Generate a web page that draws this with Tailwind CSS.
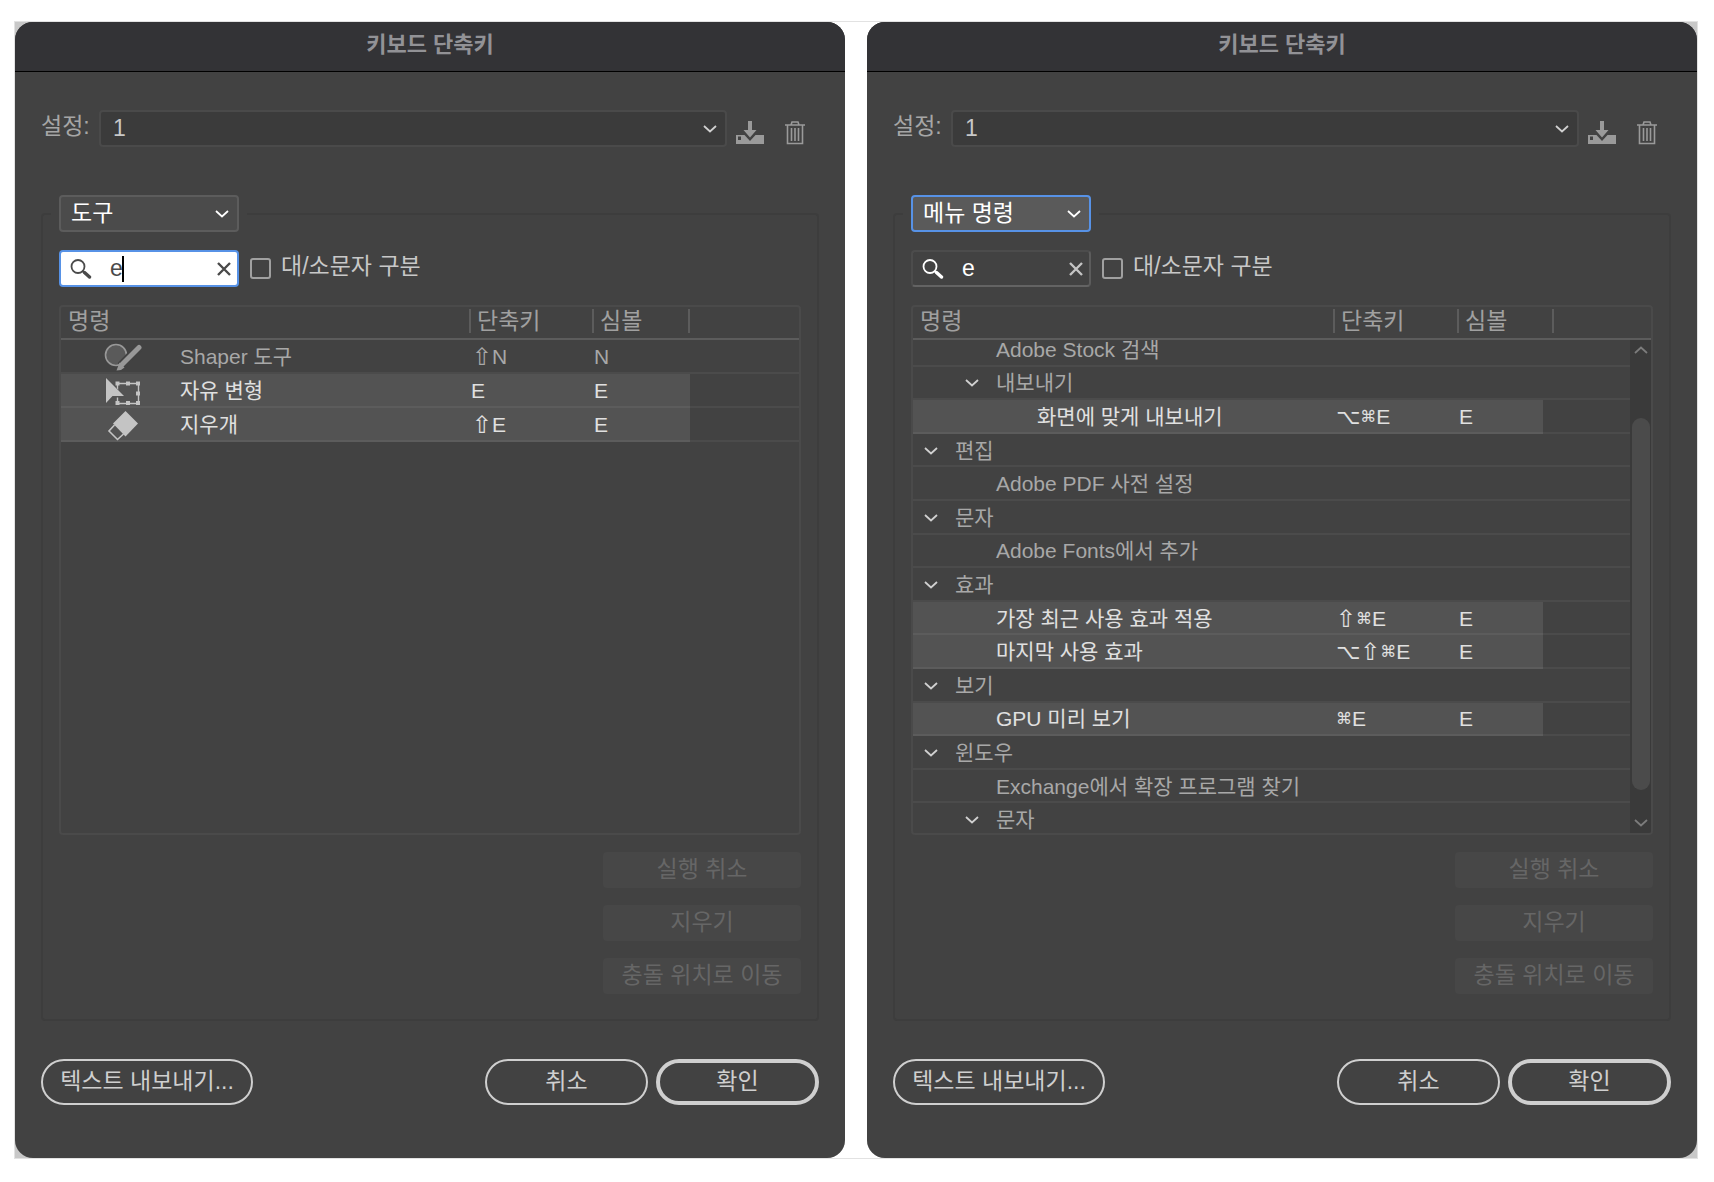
<!DOCTYPE html>
<html lang="ko">

<head>
    <meta charset="UTF-8">
    <meta name="viewport" content="width=device-width, initial-scale=1.0">
    <title>키보드 단축키</title>
    <!-- Tailwind CSS -->
    <script src="https://cdn.jsdelivr.net/npm/@tailwindcss/browser@4"></script>
</head>

<body class="bg-white pt-[21px] pl-[14px] pr-4 pb-6 font-['Liberation_Sans','Noto_Sans_CJK_KR','DejaVu_Sans',sans-serif]">
    <!-- Shared icons -->
    <svg class="hidden">
        <symbol id="chevron" viewBox="0 0 14 8">
            <path d="M1 1l6 5.500l6-5.500" fill="none" stroke="currentColor" stroke-width="1.800" />
        </symbol>
        <symbol id="save" viewBox="0 0 28 24">
            <path d="M12 0h4v9h4.500l-6.500 7.500l-6.500-7.500h4.500z" fill="currentColor" />
            <path d="M0 14h8.500l5.500 6l5.500-6h8.500v9h-28zM2 15.500v3.500h3v-3.500z" fill="currentColor" fill-rule="evenodd" />
        </symbol>
        <symbol id="trash" viewBox="0 0 20 24">
            <path d="M6 4l1-3h6l1 3M0 4h20M2.500 4v18.500h15v-18.500M6.500 7v13M10 7v13M13.500 7v13" fill="none" stroke="currentColor" stroke-width="1.600" />
        </symbol>
        <symbol id="search" viewBox="0 0 22 20">
            <circle cx="8" cy="7.500" r="6.500" fill="none" stroke="currentColor" stroke-width="1.800" />
            <path d="M12.500 12l2.500 2.200" stroke="currentColor" stroke-width="2" />
            <path d="M14.500 13.500l5 4.500" stroke="currentColor" stroke-width="3.400" stroke-linecap="round" />
        </symbol>
        <symbol id="clear" viewBox="0 0 14 14">
            <path d="M1 1l12 12M13 1l-12 12" stroke="currentColor" stroke-width="2.400" />
        </symbol>
    </svg>

    <main class="flex gap-[22px] border border-[#e2e2e2]">
        <!-- Tools -->
        <div class="flex-1 min-w-0 bg-[#c8c8c8] rounded-r-[18px]">
            <section class="bg-[#424242] rounded-[18px] overflow-hidden">
                <h1 class="h-[50px] bg-[#333336] border-b border-black text-center text-[22px] leading-[46px] font-bold text-[#929296]">키보드 단축키</h1>
                <div class="pt-[38px] pl-[26px] pr-[26px] pb-[53px]">
                    <div class="flex items-start">
                        <label for="set-a" class="w-[58px] text-[23px] leading-8 text-[#a6a6a6]">설정:</label>
                        <div class="relative flex-1">
                            <select id="set-a" class="block appearance-none w-full h-[37px] pl-3 pb-[2px] rounded border-2 border-[#4a4a4a] bg-[#3b3b3b] text-[23px] leading-8 text-[#c8c8c8]">
                                <option>1</option>
                            </select>
                            <svg class="absolute right-[10px] top-[15px] w-[14px] h-2 text-[#d0d0d0] pointer-events-none"><use href="#chevron" /></svg>
                        </div>
                        <button class="ml-[9px] mt-[11px] text-[#9a9a9a]" aria-label="저장"><svg class="w-7 h-6"><use href="#save" /></svg></button>
                        <button class="ml-[21px] mr-[14px] mt-[11px] text-[#9a9a9a]" aria-label="삭제"><svg class="w-5 h-6"><use href="#trash" /></svg></button>
                    </div>

                    <fieldset class="mt-12 min-w-0 border-2 border-[#3d3d3d] rounded px-4 pb-[25px]">
                        <legend class="-ml-2 px-2">
                            <div class="relative">
                                <select aria-label="범주" class="block appearance-none w-[180px] h-[37px] pl-[10px] pb-[3px] rounded-sm border-2 border-[#5c5c5c] bg-[#4b4b4b] text-[23px] leading-8 text-white">
                                    <option>도구</option>
                                </select>
                                <svg class="absolute right-[10px] top-[15px] w-[14px] h-2 text-white pointer-events-none"><use href="#chevron" /></svg>
                            </div>
                        </legend>
                        <div class="mt-[18px] flex items-center">
                            <div class="flex items-center w-[180px] h-[37px] rounded border-2 border-[#5792e6] bg-white text-[#4a4a4a] pl-[9px] pr-[6px]">
                                <svg class="w-[22px] h-5 shrink-0"><use href="#search" /></svg>
                                <div class="relative flex-1 ml-[18px]">
                                    <input type="text" value="e" aria-label="검색" class="block w-full h-8 text-[23px] outline-none">
                                    <span class="absolute left-3 top-[3px] w-[2px] h-[26px] bg-black"></span>
                                </div>
                                <button aria-label="지우기"><svg class="w-[14px] h-[14px]"><use href="#clear" /></svg></button>
                            </div>
                            <input id="case-a" type="checkbox" class="appearance-none ml-[11px] w-[21px] h-[21px] rounded-[3px] border-2 border-[#a0a0a0]">
                            <label for="case-a" class="ml-[10px] pb-[5px] text-[23px] leading-8 text-[#c8c8c8]">대/소문자 구분</label>
                        </div>

                        <div class="mt-[18px] h-[530px] flex flex-col border-2 border-[#4a4a4a] rounded overflow-hidden">
                            <!-- Column titles -->
                            <div class="h-[33px] shrink-0 flex items-center pb-[3px] border-b-2 border-[#5c5c5c] text-[23px] leading-6 text-[#a0a0a0]">
                                <div class="flex-1 pl-[7px]">명령</div>
                                <div class="w-[123px] pl-[6px] border-l-2 border-[#5c5c5c]">단축키</div>
                                <div class="w-[96px] pl-[6px] border-l-2 border-[#5c5c5c]">심볼</div>
                                <div class="w-[111px] h-6 border-l-2 border-[#5c5c5c]"></div>
                            </div>
                            <table class="w-full h-[102px] shrink-0 table-fixed border-separate border-spacing-0 text-[21px] leading-6 text-[#a8a8a8]">
                                <colgroup>
                                    <col>
                                    <col class="w-[123px]">
                                    <col class="w-[97px]">
                                    <col class="w-[109px]">
                                </colgroup>
                                <tbody class="[&_td]:border-b-2 [&_td]:border-white/5 [&_td]:px-0 [&_td]:pt-[2px] [&_td]:pb-0">
                                    <tr>
                                        <td>
                                            <div class="flex items-center pl-[43px] gap-[38px]">
                                                <svg class="w-[38px] h-7" viewBox="0 0 38 28">
                                                    <circle cx="12" cy="12" r="10.500" fill="#5a5a5a" stroke="#989898" stroke-width="1.600" />
                                                    <path d="M36 3L17 23" stroke="#424242" stroke-width="9" />
                                                    <path d="M35 4.500L18 21.500" stroke="#989898" stroke-width="5" stroke-linecap="round" />
                                                    <path d="M15.500 19.500l5 5l-3.500 2.500l-4.500 0.500z" fill="#989898" />
                                                </svg>
                                                <span>Shaper 도구</span>
                                            </div>
                                        </td>
                                        <td><div class="flex items-center pl-[2px] h-6 font-['Liberation_Sans','DejaVu_Sans',sans-serif]"><span class="text-[24px]">⇧</span>N</div></td>
                                        <td><span class="pl-px">N</span></td>
                                        <td></td>
                                    </tr>
                                    <tr class="text-[#e0e0e0] [&_td:not(:last-child)]:bg-[#535353]">
                                        <td>
                                            <div class="flex items-center pl-[43px] gap-[38px]">
                                                <svg class="w-[38px] h-7" viewBox="0 0 38 28">
                                                    <path d="M13.500 6.500h21v20h-21z" fill="none" stroke="#c4c4c4" stroke-width="1.400" />
                                                    <path d="M11.500 4.500h4v4h-4zM22 4.500h4v4h-4zM32 4.500h4v4h-4zM32 14.500h4v4h-4zM11.500 24h4v4h-4zM22 24h4v4h-4zM32 24h4v4h-4z" fill="#c4c4c4" />
                                                    <path d="M1.500 0v28l8.500-7.500h12z" fill="#535353" />
                                                    <path d="M2 1v25l6.500-7h11.500z" fill="#c4c4c4" />
                                                </svg>
                                                <span>자유 변형</span>
                                            </div>
                                        </td>
                                        <td><span class="pl-px">E</span></td>
                                        <td><span class="pl-px">E</span></td>
                                        <td></td>
                                    </tr>
                                    <tr class="text-[#e0e0e0] [&_td:not(:last-child)]:bg-[#535353]">
                                        <td>
                                            <div class="flex items-center pl-[43px] gap-[38px]">
                                                <svg class="w-[38px] h-7 overflow-visible" viewBox="0 0 38 28">
                                                    <path d="M21.500 0l12.500 12.500l-12.500 13l-12.500-13z" fill="#c4c4c4" />
                                                    <path d="M10.500 14l-5.500 6l8.500 8.500l6-5.500" fill="none" stroke="#c4c4c4" stroke-width="1.600" />
                                                </svg>
                                                <span>지우개</span>
                                            </div>
                                        </td>
                                        <td><div class="flex items-center pl-[2px] h-6 font-['Liberation_Sans','DejaVu_Sans',sans-serif]"><span class="text-[24px]">⇧</span>E</div></td>
                                        <td><span class="pl-px">E</span></td>
                                        <td></td>
                                    </tr>
                                </tbody>
                            </table>
                        </div>

                        <div class="mt-[17px] ml-auto w-[198px] flex flex-col gap-[17px] text-[23px] leading-8 text-[#666]">
                            <button class="h-9 pb-[3px] rounded bg-[#474747]" disabled>실행 취소</button>
                            <button class="h-9 pb-[3px] rounded bg-[#474747]" disabled>지우기</button>
                            <button class="h-9 pb-[3px] rounded bg-[#474747]" disabled>충돌 위치로 이동</button>
                        </div>
                    </fieldset>

                    <div class="mt-[38px] flex text-[23px] leading-8 text-[#cfcfcf]">
                        <button class="w-[212px] h-[46px] pb-[3px] rounded-full border-2 border-[#cfcfcf]">텍스트 내보내기...</button>
                        <button class="ml-auto w-[163px] h-[46px] pb-[3px] rounded-full border-2 border-[#cfcfcf]">취소</button>
                        <button class="ml-2 w-[163px] h-[46px] pb-[3px] rounded-full border-4 border-[#cfcfcf]">확인</button>
                    </div>
                </div>
            </section>
        </div>

        <!-- Menu commands -->
        <div class="flex-1 min-w-0 bg-[#c8c8c8] rounded-l-[18px]">
            <section class="bg-[#424242] rounded-[18px] overflow-hidden">
                <h1 class="h-[50px] bg-[#333336] border-b border-black text-center text-[22px] leading-[46px] font-bold text-[#929296]">키보드 단축키</h1>
                <div class="pt-[38px] pl-[26px] pr-[26px] pb-[53px]">
                    <div class="flex items-start">
                        <label for="set-b" class="w-[58px] text-[23px] leading-8 text-[#a6a6a6]">설정:</label>
                        <div class="relative flex-1">
                            <select id="set-b" class="block appearance-none w-full h-[37px] pl-3 pb-[2px] rounded border-2 border-[#4a4a4a] bg-[#3b3b3b] text-[23px] leading-8 text-[#c8c8c8]">
                                <option>1</option>
                            </select>
                            <svg class="absolute right-[10px] top-[15px] w-[14px] h-2 text-[#d0d0d0] pointer-events-none"><use href="#chevron" /></svg>
                        </div>
                        <button class="ml-[9px] mt-[11px] text-[#9a9a9a]" aria-label="저장"><svg class="w-7 h-6"><use href="#save" /></svg></button>
                        <button class="ml-[21px] mr-[14px] mt-[11px] text-[#9a9a9a]" aria-label="삭제"><svg class="w-5 h-6"><use href="#trash" /></svg></button>
                    </div>

                    <fieldset class="mt-12 min-w-0 border-2 border-[#3d3d3d] rounded px-4 pb-[25px]">
                        <legend class="-ml-2 px-2">
                            <div class="relative">
                                <select aria-label="범주" class="block appearance-none w-[180px] h-[37px] pl-[10px] pb-[3px] rounded border-2 border-[#5792e6] bg-[#5a5a5a] text-[23px] leading-8 text-white">
                                    <option>메뉴 명령</option>
                                </select>
                                <svg class="absolute right-[10px] top-[15px] w-[14px] h-2 text-white pointer-events-none"><use href="#chevron" /></svg>
                            </div>
                        </legend>
                        <div class="mt-[18px] flex items-center">
                            <div class="flex items-center w-[180px] h-[37px] rounded border-2 border-[#4c4c4c] border-b-[#636363] border-r-[#5c5c5c] text-white pl-[9px] pr-[6px]">
                                <svg class="w-[22px] h-5 shrink-0"><use href="#search" /></svg>
                                <div class="flex-1 ml-[18px]">
                                    <input type="text" value="e" aria-label="검색" class="block w-full h-8 text-[23px] outline-none">
                                </div>
                                <button class="text-[#c4c4c4]" aria-label="지우기"><svg class="w-[14px] h-[14px]"><use href="#clear" /></svg></button>
                            </div>
                            <input id="case-b" type="checkbox" class="appearance-none ml-[11px] w-[21px] h-[21px] rounded-[3px] border-2 border-[#a0a0a0]">
                            <label for="case-b" class="ml-[10px] pb-[5px] text-[23px] leading-8 text-[#c8c8c8]">대/소문자 구분</label>
                        </div>

                        <div class="mt-[18px] h-[530px] flex flex-col border-2 border-[#4a4a4a] rounded overflow-hidden">
                            <!-- Column titles -->
                            <div class="h-[33px] shrink-0 flex items-center pb-[3px] border-b-2 border-[#5c5c5c] text-[23px] leading-6 text-[#a0a0a0]">
                                <div class="flex-1 pl-[7px]">명령</div>
                                <div class="w-[124px] pl-[6px] border-l-2 border-[#5c5c5c]">단축키</div>
                                <div class="w-[95px] pl-[6px] border-l-2 border-[#5c5c5c]">심볼</div>
                                <div class="w-[99px] h-6 border-l-2 border-[#5c5c5c]"></div>
                            </div>
                            <div class="flex flex-1 min-h-0">
                                <!-- List, scrolled a little past its first row -->
                                <div class="flex-1 min-w-0 overflow-hidden">
                                    <table class="-mt-[7px] w-full h-[504px] table-fixed border-separate border-spacing-0 text-[21px] leading-6 text-[#a8a8a8]">
                                        <colgroup>
                                            <col>
                                            <col class="w-[124px]">
                                            <col class="w-[85px]">
                                            <col class="w-[87px]">
                                        </colgroup>
                                        <tbody class="[&_td]:border-b-2 [&_td]:border-white/5 [&_td]:px-0 [&_td]:pt-[2px] [&_td]:pb-0">
                                            <tr>
                                                <td colspan="4"><div class="pl-[83px]">Adobe Stock 검색</div></td>
                                            </tr>
                                            <tr>
                                                <td colspan="4"><div class="flex items-center gap-[17px] pl-[52px]"><svg class="w-[14px] h-2 text-[#d0d0d0]"><use href="#chevron" /></svg>내보내기</div></td>
                                            </tr>
                                            <tr class="text-[#e0e0e0] [&_td:not(:last-child)]:bg-[#535353]">
                                                <td><div class="pl-[124px]">화면에 맞게 내보내기</div></td>
                                                <td><div class="flex items-center pl-[2px] h-6 font-['Liberation_Sans','DejaVu_Sans',sans-serif]">⌥<span class="text-[16px]">⌘</span>E</div></td>
                                                <td><span class="pl-px">E</span></td>
                                                <td></td>
                                            </tr>
                                            <tr>
                                                <td colspan="4"><div class="flex items-center gap-[17px] pl-[11px]"><svg class="w-[14px] h-2 text-[#d0d0d0]"><use href="#chevron" /></svg>편집</div></td>
                                            </tr>
                                            <tr>
                                                <td colspan="4"><div class="pl-[83px]">Adobe PDF 사전 설정</div></td>
                                            </tr>
                                            <tr>
                                                <td colspan="4"><div class="flex items-center gap-[17px] pl-[11px]"><svg class="w-[14px] h-2 text-[#d0d0d0]"><use href="#chevron" /></svg>문자</div></td>
                                            </tr>
                                            <tr>
                                                <td colspan="4"><div class="pl-[83px]">Adobe Fonts에서 추가</div></td>
                                            </tr>
                                            <tr>
                                                <td colspan="4"><div class="flex items-center gap-[17px] pl-[11px]"><svg class="w-[14px] h-2 text-[#d0d0d0]"><use href="#chevron" /></svg>효과</div></td>
                                            </tr>
                                            <tr class="text-[#e0e0e0] [&_td:not(:last-child)]:bg-[#535353]">
                                                <td><div class="pl-[83px]">가장 최근 사용 효과 적용</div></td>
                                                <td><div class="flex items-center pl-[2px] h-6 font-['Liberation_Sans','DejaVu_Sans',sans-serif]"><span class="text-[24px]">⇧</span><span class="text-[16px]">⌘</span>E</div></td>
                                                <td><span class="pl-px">E</span></td>
                                                <td></td>
                                            </tr>
                                            <tr class="text-[#e0e0e0] [&_td:not(:last-child)]:bg-[#535353]">
                                                <td><div class="pl-[83px]">마지막 사용 효과</div></td>
                                                <td><div class="flex items-center pl-[2px] h-6 font-['Liberation_Sans','DejaVu_Sans',sans-serif]">⌥<span class="text-[24px]">⇧</span><span class="text-[16px]">⌘</span>E</div></td>
                                                <td><span class="pl-px">E</span></td>
                                                <td></td>
                                            </tr>
                                            <tr>
                                                <td colspan="4"><div class="flex items-center gap-[17px] pl-[11px]"><svg class="w-[14px] h-2 text-[#d0d0d0]"><use href="#chevron" /></svg>보기</div></td>
                                            </tr>
                                            <tr class="text-[#e0e0e0] [&_td:not(:last-child)]:bg-[#535353]">
                                                <td><div class="pl-[83px]">GPU 미리 보기</div></td>
                                                <td><div class="flex items-center pl-[2px] h-6 font-['Liberation_Sans','DejaVu_Sans',sans-serif]"><span class="text-[16px]">⌘</span>E</div></td>
                                                <td><span class="pl-px">E</span></td>
                                                <td></td>
                                            </tr>
                                            <tr>
                                                <td colspan="4"><div class="flex items-center gap-[17px] pl-[11px]"><svg class="w-[14px] h-2 text-[#d0d0d0]"><use href="#chevron" /></svg>윈도우</div></td>
                                            </tr>
                                            <tr>
                                                <td colspan="4"><div class="pl-[83px]">Exchange에서 확장 프로그램 찾기</div></td>
                                            </tr>
                                            <tr>
                                                <td colspan="4"><div class="flex items-center gap-[17px] pl-[52px]"><svg class="w-[14px] h-2 text-[#d0d0d0]"><use href="#chevron" /></svg>문자</div></td>
                                            </tr>
                                        </tbody>
                                    </table>
                                </div>
                                <!-- Scrollbar -->
                                <div class="w-[21px] flex flex-col items-center bg-[#3a3a3a] py-[6px]">
                                    <svg class="w-[14px] h-2 text-[#7c7c7c] rotate-180"><use href="#chevron" /></svg>
                                    <div class="mt-[64px] w-[18px] h-[372px] rounded-full bg-[#4b4b4b]"></div>
                                    <svg class="mt-auto w-[14px] h-2 text-[#7c7c7c]"><use href="#chevron" /></svg>
                                </div>
                            </div>
                        </div>

                        <div class="mt-[17px] ml-auto w-[198px] flex flex-col gap-[17px] text-[23px] leading-8 text-[#666]">
                            <button class="h-9 pb-[3px] rounded bg-[#474747]" disabled>실행 취소</button>
                            <button class="h-9 pb-[3px] rounded bg-[#474747]" disabled>지우기</button>
                            <button class="h-9 pb-[3px] rounded bg-[#474747]" disabled>충돌 위치로 이동</button>
                        </div>
                    </fieldset>

                    <div class="mt-[38px] flex text-[23px] leading-8 text-[#cfcfcf]">
                        <button class="w-[212px] h-[46px] pb-[3px] rounded-full border-2 border-[#cfcfcf]">텍스트 내보내기...</button>
                        <button class="ml-auto w-[163px] h-[46px] pb-[3px] rounded-full border-2 border-[#cfcfcf]">취소</button>
                        <button class="ml-2 w-[163px] h-[46px] pb-[3px] rounded-full border-4 border-[#cfcfcf]">확인</button>
                    </div>
                </div>
            </section>
        </div>
    </main>
</body>

</html>
